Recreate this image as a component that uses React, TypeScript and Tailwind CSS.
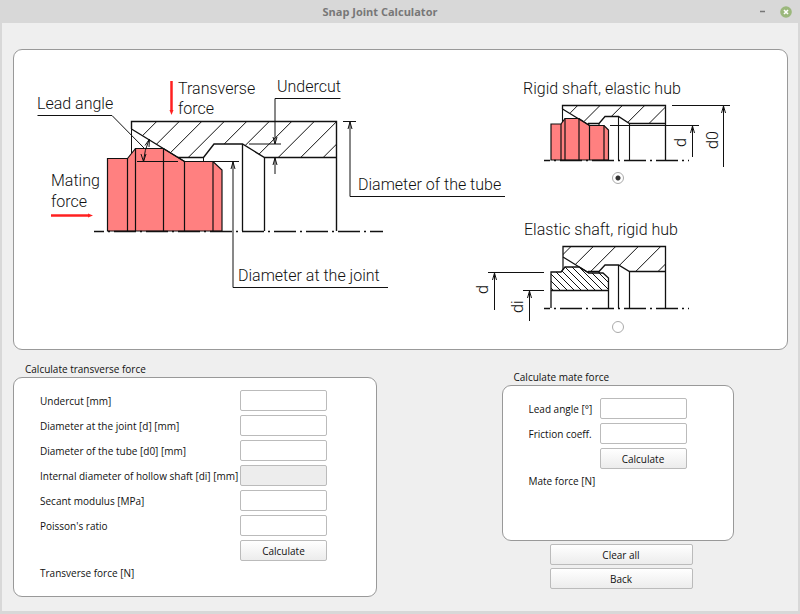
import { useState } from 'react';
import type { ReactNode } from 'react';

type JointKind = 'rigid' | 'elastic';

interface HatchProps {
  id: string;
  points: string;
  starts: number[];
  top: number;
  depth: number;
  backward?: boolean;
}

// Hatch lines at 45 degrees, clipped to the outline of the section
const Hatch: React.FC<HatchProps> = ({ id, points, starts, top, depth, backward }) => (
  <g>
    <clipPath id={id}>
      <polygon points={points} />
    </clipPath>
    <g clipPath={`url(#${id})`} strokeWidth="1">
      {starts.map((x) => (
        <line key={x} x1={x} y1={top} x2={backward ? x + depth : x - depth} y2={top + depth} />
      ))}
    </g>
  </g>
);

const ArrowUp: React.FC<{ x: number; y: number }> = ({ x, y }) => (
  <path d={`M${x - 2} ${y + 7}L${x} ${y}L${x + 2} ${y + 7}`} strokeWidth="1" />
);

const drawingText = "font-['Roboto',sans-serif] font-light text-base fill-[#111] stroke-none";

const SnapJointDrawing = () => (
  <svg viewBox="30 70 480 230" className="w-[480px] min-w-0 shrink" fill="none" stroke="#111" role="img" aria-label="Snap joint dimensions">
    {/* Shaft */}
    <path d="M107.5 231V158.5H127.5L135.5 148.5H163.5L184.5 161.5H213L222 170V231Z" fill="#ff8080" strokeWidth="1.2" />
    <path d="M127.5 158.5V231M135.5 148.5V231M163.5 148.5V231M184.5 161.5V231M213 161.5V231" strokeWidth="1.2" />

    {/* Hub */}
    <Hatch
      id="hub-main"
      points="131.5,121.5 336.5,121.5 336.5,157.5 264,157.5 242.5,144 214,144 203.5,157.5 179,157.5 131.5,129"
      starts={[156.7, 179.2, 201.7, 224.2, 246.7, 269.2, 291.7, 314.2, 336.7, 359.2]}
      top={121.5}
      depth={40}
    />
    <path d="M131.5 129V121.5H336.5V231M131.5 129L184.5 161.5M178 157.5H203.5L214 144H242.5L264.5 157.5H336.5" strokeWidth="1.4" />
    <path d="M131.5 129V153M203.5 157.5V161.5" strokeWidth="1" />
    <path d="M242.5 144V231M264.5 157.5V231" strokeWidth="1.3" />
    <path d="M94 231.5H383" strokeWidth="1.3" strokeDasharray="22 4 2 4" strokeDashoffset="12" />

    {/* Lead angle */}
    <path d="M37.5 115.5H112L144 148M137 161.5H178M149 140Q144.5 150 143.5 161" strokeWidth="1" />
    <path d="M145 145.5L149.5 139L149 147M141 154L143.5 161.5L146 154" strokeWidth="1" />

    {/* Dimension lines */}
    <path d="M340.5 98.5H275V144M249 144H281M275 158V174" strokeWidth="1" />
    <path d="M273 137L275 144L277 137" strokeWidth="1" />
    <ArrowUp x={275} y={158} />
    <path d="M343 121.5H356M350 121.5V196.5H505" strokeWidth="1" />
    <ArrowUp x={350} y={122} />
    <path d="M213 161.5H239M233 161.5V287.5H388" strokeWidth="1" />
    <ArrowUp x={233} y={162} />

    {/* Forces */}
    <g stroke="#ff2020" fill="#ff2020">
      <path d="M171.5 81V111" strokeWidth="2.5" />
      <path d="M169.5 110H173.5L171.5 115Z" stroke="none" />
      <path d="M51 215.5H89" strokeWidth="2.5" />
      <path d="M88 213.5V217.5L93 215.5Z" stroke="none" />
    </g>

    <g className={drawingText}>
      <text x="37" y="109">Lead angle</text>
      <text x="178" y="94">Transverse</text>
      <text x="178" y="114">force</text>
      <text x="277" y="92">Undercut</text>
      <text x="51" y="186">Mating</text>
      <text x="51" y="207">force</text>
      <text x="358" y="190">Diameter of the tube</text>
      <text x="238" y="281">Diameter at the joint</text>
    </g>
  </svg>
);

const RigidShaftDrawing = () => (
  <svg viewBox="518 78 200 90" className="w-[200px] overflow-visible" fill="none" stroke="#111" aria-hidden="true">
    <path d="M551 160V124H561L565 118.5H579L589.5 125.5H604L608.5 130V160Z" fill="#ff8080" strokeWidth="1.2" />
    <path d="M561 124V160M565 118.5V160M579 118.5V160M589.5 125.5V160M604 125.5V160" strokeWidth="1.2" />
    <Hatch
      id="hub-rigid"
      points="562.5,105.5 665.5,105.5 665.5,123.5 629,123.5 618.5,116.5 605,116.5 599,123.5 588,123.5 562.5,108"
      starts={[577.7, 600, 622.3, 644.7, 667]}
      top={105.5}
      depth={22}
    />
    <path d="M562.5 109V105.5H665.5V160M562.5 109L589.5 125.5M588 123.5H599L605 116.5H618.5L629.5 123.5H665.5" strokeWidth="1.3" />
    <path d="M562.5 108V122M599 123.5V125.5M618.5 116.5V160M629.5 123.5V160" strokeWidth="1.1" />
    <path d="M544 160.5H689" strokeWidth="1.3" strokeDasharray="22 4 2 4" strokeDashoffset="16" />
    <path d="M610 125.5H699M692.5 126V157M672 105.5H730M723.5 106V167" strokeWidth="1" />
    <ArrowUp x={692.5} y={126} />
    <ArrowUp x={723.5} y={106} />
    <g className={drawingText}>
      <text x="523" y="94">Rigid shaft, elastic hub</text>
      <text transform="translate(686 147) rotate(-90)">d</text>
      <text transform="translate(718 149) rotate(-90)">d0</text>
    </g>
  </svg>
);

const ElasticShaftDrawing = () => (
  <svg viewBox="518 220 200 97" className="w-[200px] overflow-visible" fill="none" stroke="#111" aria-hidden="true">
    <Hatch
      id="shaft-elastic"
      points="551,290 551,272 561,272 565,267 579,267 589,273 603,273 608.5,278 608.5,290"
      starts={[529, 536, 543, 550, 557, 564, 571, 578, 585, 592, 599, 606]}
      top={266}
      depth={26}
      backward
    />
    <path d="M551 308V272H561L565 267H579L589 273H603L608.5 278V308M551 290.5H608.5" strokeWidth="1.3" />
    <Hatch
      id="hub-elastic"
      points="563,246.5 665.5,246.5 665.5,271.5 629,271.5 618.5,265 605,265 599,271.5 588,271.5 563,257"
      starts={[571, 593.3, 615.7, 638.3, 660.7, 683]}
      top={246.5}
      depth={28}
    />
    <path d="M563 257V246.5H665.5V308M563 257L589 273M588 271.5H599L605 265H618.5L629.5 271.5H665.5" strokeWidth="1.3" />
    <path d="M563 257V270M599 271.5V273M618.5 265V308M629.5 271.5V308" strokeWidth="1.2" />
    <path d="M544 308.5H689" strokeWidth="1.3" strokeDasharray="22 4 2 4" strokeDashoffset="16" />
    <path d="M488 272.5H544M494.5 273V310M523 290.5H544M529.5 291V321" strokeWidth="1" />
    <ArrowUp x={494.5} y={273} />
    <ArrowUp x={529.5} y={291} />
    <g className={drawingText}>
      <text x="524" y="235">Elastic shaft, rigid hub</text>
      <text transform="translate(488 294) rotate(-90)">d</text>
      <text transform="translate(523 313) rotate(-90)">di</text>
    </g>
  </svg>
);

interface JointOptionProps {
  label: string;
  checked: boolean;
  onSelect: () => void;
  children: ReactNode;
}

const JointOption: React.FC<JointOptionProps> = ({ label, checked, onSelect, children }) => (
  <label className="flex flex-col items-center gap-1">
    {children}
    <input
      type="radio"
      name="joint"
      aria-label={label}
      checked={checked}
      onChange={onSelect}
      className="appearance-none w-3 h-3 rounded-full border border-[#aaa] bg-white checked:bg-[radial-gradient(circle,#333_2px,#fff_3px)]"
    />
  </label>
);

const Button: React.FC<{ children: ReactNode; className: string }> = ({ children, className }) => (
  <button type="button" className={`h-[21px] rounded-xs border border-[#bbb] bg-linear-to-b from-white to-[#ececec] leading-none ${className}`}>
    {children}
  </button>
);

interface FieldProps {
  id: string;
  label: string;
  disabled?: boolean;
}

const Field: React.FC<FieldProps> = ({ id, label, disabled }) => (
  <>
    <label htmlFor={id} className="whitespace-nowrap">{label}</label>
    <input
      id={id}
      type="text"
      disabled={disabled}
      className="w-[87px] h-[21px] px-1 rounded-xs border border-[#bbb] bg-white disabled:bg-[#ededed]"
    />
  </>
);

const box = "rounded-[9px] border border-[#999] bg-white";

const App = () => {
  const [joint, setJoint] = useState<JointKind>('rigid');

  return (
    <div className="min-h-screen flex flex-col bg-[#d8d8d8] font-['Open_Sans','Noto_Sans',sans-serif] text-[10px] leading-4 text-[#111]">
      {/* Title bar */}
      <header className="h-[23px] pl-1 pr-2 flex items-center">
        <h1 className="flex-1 text-center text-[11px] font-bold text-[#777]">Snap Joint Calculator</h1>
        <div className="flex items-center gap-3">
          <button type="button" aria-label="Minimize" className="w-3 h-3 flex items-center justify-center">
            <svg viewBox="0 0 12 12" className="w-3 h-3" stroke="#777" strokeWidth="1.5"><path d="M4 5.5H9" /></svg>
          </button>
          <button type="button" aria-label="Close" className="w-3 h-3">
            <svg viewBox="0 0 12 12" className="w-3 h-3">
              <circle cx="6" cy="6" r="5.8" fill="#9bb87c" />
              <path d="M4 4L8 8M8 4L4 8" stroke="#fff" strokeWidth="1.6" />
            </svg>
          </button>
        </div>
      </header>

      <main className="flex-1 mx-[2px] mb-[3px] pl-[11px] pr-[10px] pt-[26px] pb-3 bg-[#efefef]">
        {/* Drawings */}
        <section className={`${box} h-[301px] pl-4 pr-[69px] pt-5 flex items-start justify-between gap-2`}>
          <SnapJointDrawing />
          <div className="flex flex-col gap-9 pt-2 shrink-0">
            <JointOption label="Rigid shaft, elastic hub" checked={joint === 'rigid'} onSelect={() => setJoint('rigid')}>
              <RigidShaftDrawing />
            </JointOption>
            <JointOption label="Elastic shaft, rigid hub" checked={joint === 'elastic'} onSelect={() => setJoint('elastic')}>
              <ElasticShaftDrawing />
            </JointOption>
          </div>
        </section>

        <div className="flex items-start justify-between pt-[11px]">
          {/* Transverse force */}
          <section className="basis-[47%]">
            <h2 className="pl-3">Calculate transverse force</h2>
            <form className={`${box} h-[220px] pl-[26px] pt-3`}>
              <div className="grid grid-cols-[200px_auto] justify-start items-center gap-y-1">
                <Field id="undercut" label="Undercut [mm]" />
                <Field id="joint-diameter" label="Diameter at the joint [d] [mm]" />
                <Field id="tube-diameter" label="Diameter of the tube [d0] [mm]" />
                <Field id="inner-diameter" label="Internal diameter of hollow shaft [di] [mm]" disabled={joint === 'rigid'} />
                <Field id="secant" label="Secant modulus [MPa]" />
                <Field id="poisson" label="Poisson's ratio" />
                <Button className="col-start-2">Calculate</Button>
              </div>
              <p className="pt-1">Transverse force [N]</p>
            </form>
          </section>

          {/* Mate force */}
          <section className="basis-[30%] mr-[54px] pt-2">
            <h2 className="pl-3">Calculate mate force</h2>
            <form className={`${box} h-[156px] pl-[26px] pt-3`}>
              <div className="grid grid-cols-[71px_auto] justify-start items-center gap-y-1">
                <Field id="lead-angle" label="Lead angle [°]" />
                <Field id="friction" label="Friction coeff." />
                <Button className="col-start-2">Calculate</Button>
              </div>
              <p className="pt-1">Mate force [N]</p>
            </form>
            <div className="flex flex-col gap-[3px] pt-[3px] pl-12">
              <Button className="w-[143px]">Clear all</Button>
              <Button className="w-[143px]">Back</Button>
            </div>
          </section>
        </div>
      </main>
    </div>
  );
};

export default App;
